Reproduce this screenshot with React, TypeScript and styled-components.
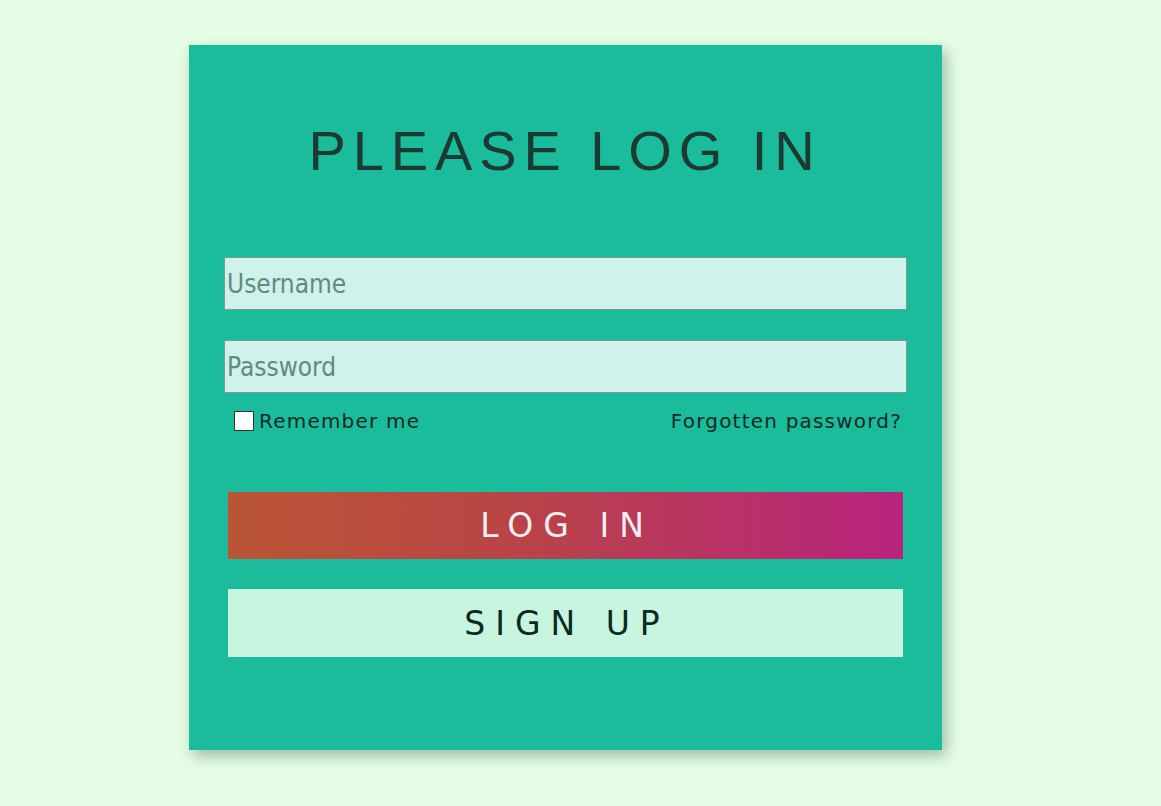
import React from "react";
import styled, { createGlobalStyle } from "styled-components";

const GlobalStyle = createGlobalStyle`
  html, body {
    margin: 0;
    padding: 0;
    background: #e6fde5;
  }
  body {
    font-family: "DejaVu Sans", sans-serif;
  }
`;

const Page = styled.div`
  display: flex;
  justify-content: flex-start;
  padding: 45px 0 56px 189px;
  min-height: 806px;
  box-sizing: border-box;
`;

const Card = styled.form`
  width: 753px;
  height: 705px;
  box-sizing: border-box;
  background: #1abc9c;
  padding: 78px 35px 0 35px;
  box-shadow: 4px 6px 14px rgba(20, 70, 50, 0.35);
  display: flex;
  flex-direction: column;
`;

const Title = styled.h1`
  margin: 0 0 78px 0;
  font-family: "Liberation Sans", Arial, sans-serif;
  font-weight: 400;
  font-size: 56px;
  line-height: 56px;
  letter-spacing: 6.9px;
  text-align: center;
  color: #1d3a32;
  padding-right: 1px;
`;

const Input = styled.input<{ $gap?: number }>`
  display: block;
  width: 100%;
  height: 53px;
  box-sizing: border-box;
  margin: 0 0 ${(p) => p.$gap ?? 0}px 0;
  padding: 1px 2px;
  border: 1px solid #7d9a93;
  background: #d1f2eb;
  font-family: "DejaVu Sans Condensed", Tahoma, sans-serif;
  font-size: 26px;
  color: #1d3a32;
  outline: none;
  caret-color: #1d3a32;
  &::placeholder {
    color: #5f8c81;
  }
`;

const OptionsRow = styled.div`
  display: flex;
  align-items: center;
  justify-content: space-between;
  height: 24px;
  margin-top: 16px;
  padding: 0 5px 0 10px;
  font-family: "DejaVu Sans", sans-serif;
  font-size: 20px;
  letter-spacing: 1.2px;
  color: #0e2a22;
`;

const RememberLabel = styled.label`
  display: flex;
  align-items: center;
  gap: 5px;
`;

const Check = styled.span`
  display: inline-block;
  width: 18px;
  height: 18px;
  background: #ffffff;
  border: 1px solid #333;
`;

const ForgotLink = styled.a`
  color: #0e2a22;
  text-decoration: none;
`;

const Button = styled.button<{ $variant: "primary" | "secondary" }>`
  display: block;
  width: 675px;
  margin: ${(p) => (p.$variant === "primary" ? "59px 4px 0 4px" : "30px 4px 0 4px")};
  height: ${(p) => (p.$variant === "primary" ? "67px" : "68px")};
  border: none;
  padding: 0 0 0 3px;
  font-family: "DejaVu Sans", sans-serif;
  font-size: 33px;
  font-weight: 400;
  letter-spacing: 10px;
  cursor: pointer;
  background: ${(p) =>
    p.$variant === "primary"
      ? "linear-gradient(to right, #ba5536 0%, #b94545 40%, #b8237f 100%)"
      : "#c8f5df"};
  color: ${(p) => (p.$variant === "primary" ? "#f0efef" : "#0a2a1e")};
`;

export default function App() {
  return (
    <>
      <GlobalStyle />
      <Page>
        <Card onSubmit={(e) => e.preventDefault()}>
          <Title>PLEASE LOG IN</Title>
          <Input type="text" placeholder="Username" autoFocus $gap={30} />
          <Input type="password" placeholder="Password" />
          <OptionsRow>
            <RememberLabel>
              <Check />
              Remember me
            </RememberLabel>
            <ForgotLink href="#">Forgotten password?</ForgotLink>
          </OptionsRow>
          <Button type="submit" $variant="primary">LOG IN</Button>
          <Button type="button" $variant="secondary">SIGN UP</Button>
        </Card>
      </Page>
    </>
  );
}
